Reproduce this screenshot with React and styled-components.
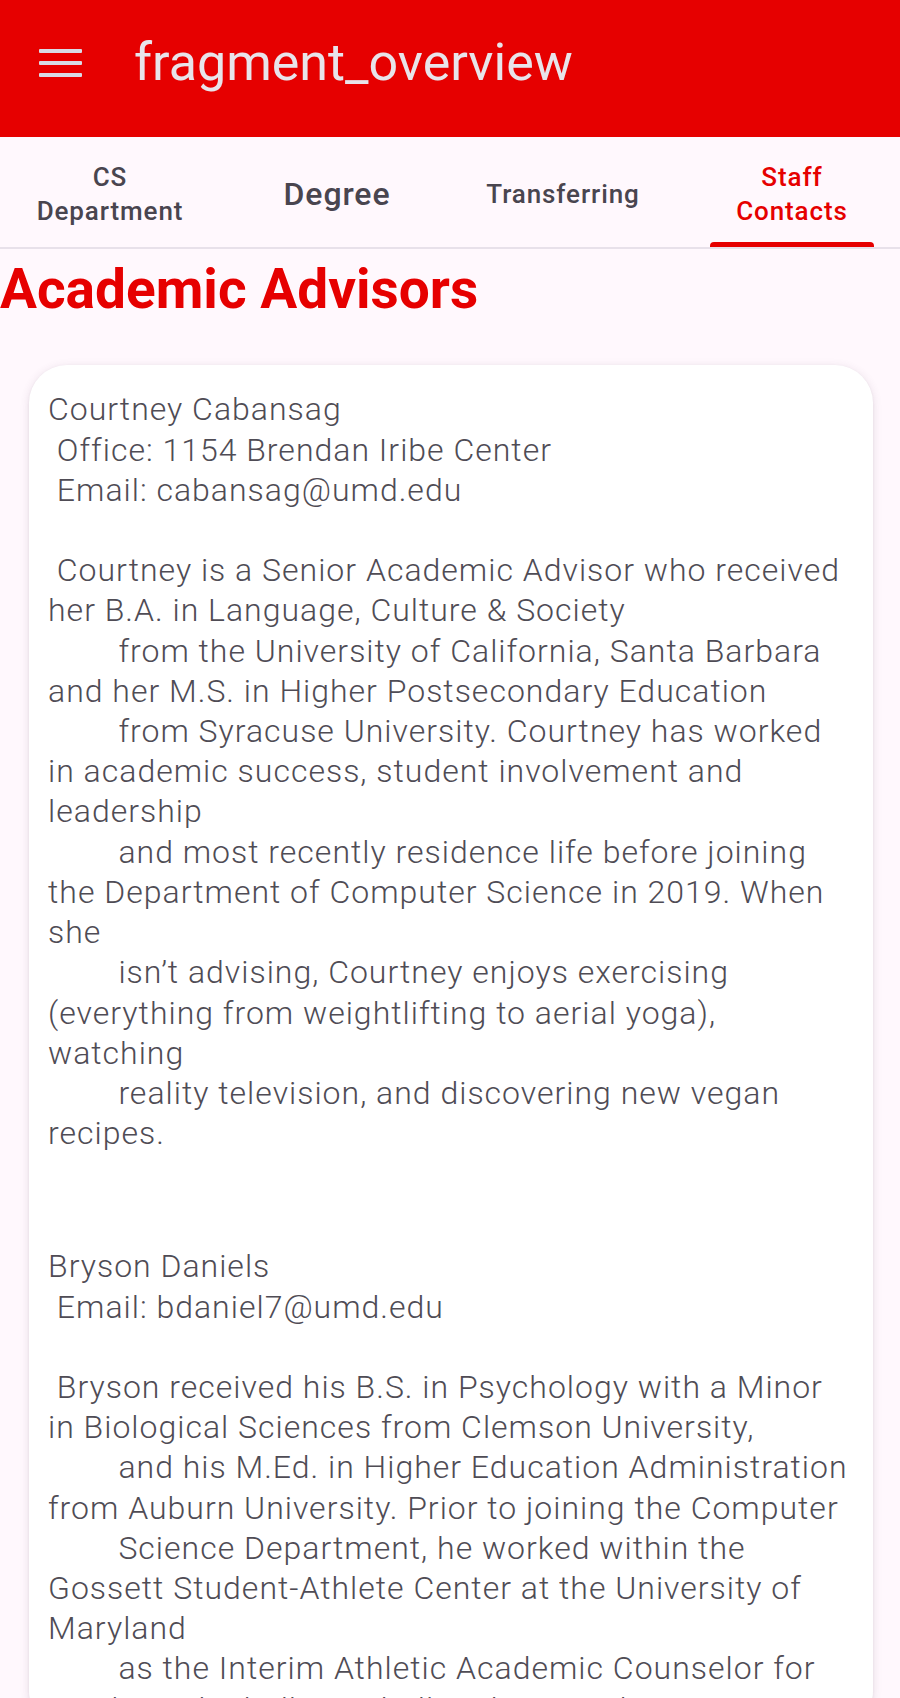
import React from "react";
import styled, { createGlobalStyle } from "styled-components";

const GlobalStyle = createGlobalStyle`
  html, body {
    margin: 0;
    padding: 0;
    background: #fff8fd;
  }
  body {
    font-family: Roboto, "Noto Sans", "Liberation Sans", sans-serif;
  }
`;

const Screen = styled.div`
  height: 100vh;
  overflow: hidden;
  display: flex;
  flex-direction: column;
  background: #fff8fd;
`;

const AppBar = styled.header`
  height: 137px;
  flex-shrink: 0;
  background: #e60000;
  display: flex;
  align-items: center;
  padding: 0 0 12px 39px;
  box-sizing: border-box;
`;

const MenuButton = styled.button`
  width: 43px;
  height: 28px;
  padding: 0;
  border: 0;
  background: none;
  display: flex;
  flex-direction: column;
  justify-content: space-between;
  cursor: pointer;
`;

const MenuLine = styled.span`
  display: block;
  height: 4px;
  border-radius: 1px;
  background: #d9dbe6;
`;

const Title = styled.h1`
  margin: 0 0 0 52px;
  font-size: 52px;
  font-weight: 400;
  color: #e8e4ea;
  line-height: 1;
`;

const TabRow = styled.nav`
  height: 112px;
  flex-shrink: 0;
  display: flex;
  border-bottom: 2px solid #e8e1ea;
  box-sizing: border-box;
  overflow: hidden;
`;

const Tab = styled.div`
  position: relative;
  flex: 0 0 ${(p) => p.$w}px;
  display: flex;
  align-items: center;
  justify-content: center;
  padding-top: 4px;
  text-align: center;
  font-size: ${(p) => p.$size || 26}px;
  font-weight: 500;
  letter-spacing: 0.9px;
  line-height: 34px;
  color: ${(p) => (p.$active ? "#e60000" : "#49454f")};
`;

const TabLabel = styled.span`
  white-space: pre;
`;

const Indicator = styled.span`
  position: absolute;
  bottom: -2px;
  left: 50%;
  transform: translateX(-50%);
  width: 164px;
  height: 7px;
  border-radius: 4px 4px 0 0;
  background: #e60000;
`;

const Heading = styled.h2`
  margin: 8px 0 0;
  font-size: 55px;
  font-weight: 700;
  line-height: 1.172;
  color: #e60000;
`;

const Card = styled.section`
  margin: 44px 27px 0 29px;
  background: #ffffff;
  border-radius: 38px;
  box-shadow: 0 2px 10px rgba(90, 60, 90, 0.14), 0 1px 3px rgba(0, 0, 0, 0.06);
  padding: 24px 19px 0;
  display: flex;
  flex-direction: column;
  gap: 93px;
`;

const Entry = styled.p`
  margin: 0;
  white-space: pre;
  font-size: 32px;
  font-weight: 300;
  letter-spacing: 1px;
  line-height: 40.2px;
  color: #4f4c55;
`;

const tabs = [
  { label: "CS\nDepartment", w: 220 },
  { label: "Degree", w: 234, size: 32 },
  { label: "Transferring", w: 218 },
  { label: "Staff\nContacts", w: 240, active: true },
];

const advisors = [
  `Courtney Cabansag
 Office: 1154 Brendan Iribe Center
 Email: cabansag@umd.edu

 Courtney is a Senior Academic Advisor who received
her B.A. in Language, Culture & Society
        from the University of California, Santa Barbara
and her M.S. in Higher Postsecondary Education
        from Syracuse University. Courtney has worked
in academic success, student involvement and
leadership
        and most recently residence life before joining
the Department of Computer Science in 2019. When
she
        isn’t advising, Courtney enjoys exercising
(everything from weightlifting to aerial yoga),
watching
        reality television, and discovering new vegan
recipes.`,
  `Bryson Daniels
 Email: bdaniel7@umd.edu

 Bryson received his B.S. in Psychology with a Minor
in Biological Sciences from Clemson University,
        and his M.Ed. in Higher Education Administration
from Auburn University. Prior to joining the Computer
        Science Department, he worked within the
Gossett Student-Athlete Center at the University of
Maryland
        as the Interim Athletic Academic Counselor for
Men’s Basketball, Football and Women’s Lacrosse.`,
];

export default function App() {
  return (
    <>
      <GlobalStyle />
      <Screen>
        <AppBar>
          <MenuButton aria-label="menu">
            <MenuLine />
            <MenuLine />
            <MenuLine />
          </MenuButton>
          <Title>fragment_overview</Title>
        </AppBar>
        <TabRow>
          {tabs.map((t) => (
            <Tab key={t.label} $w={t.w} $size={t.size} $active={t.active}>
              <TabLabel>{t.label}</TabLabel>
              {t.active && <Indicator />}
            </Tab>
          ))}
        </TabRow>
        <Heading>Academic Advisors</Heading>
        <Card>
          {advisors.map((text, i) => (
            <Entry key={i}>{text}</Entry>
          ))}
        </Card>
      </Screen>
    </>
  );
}
